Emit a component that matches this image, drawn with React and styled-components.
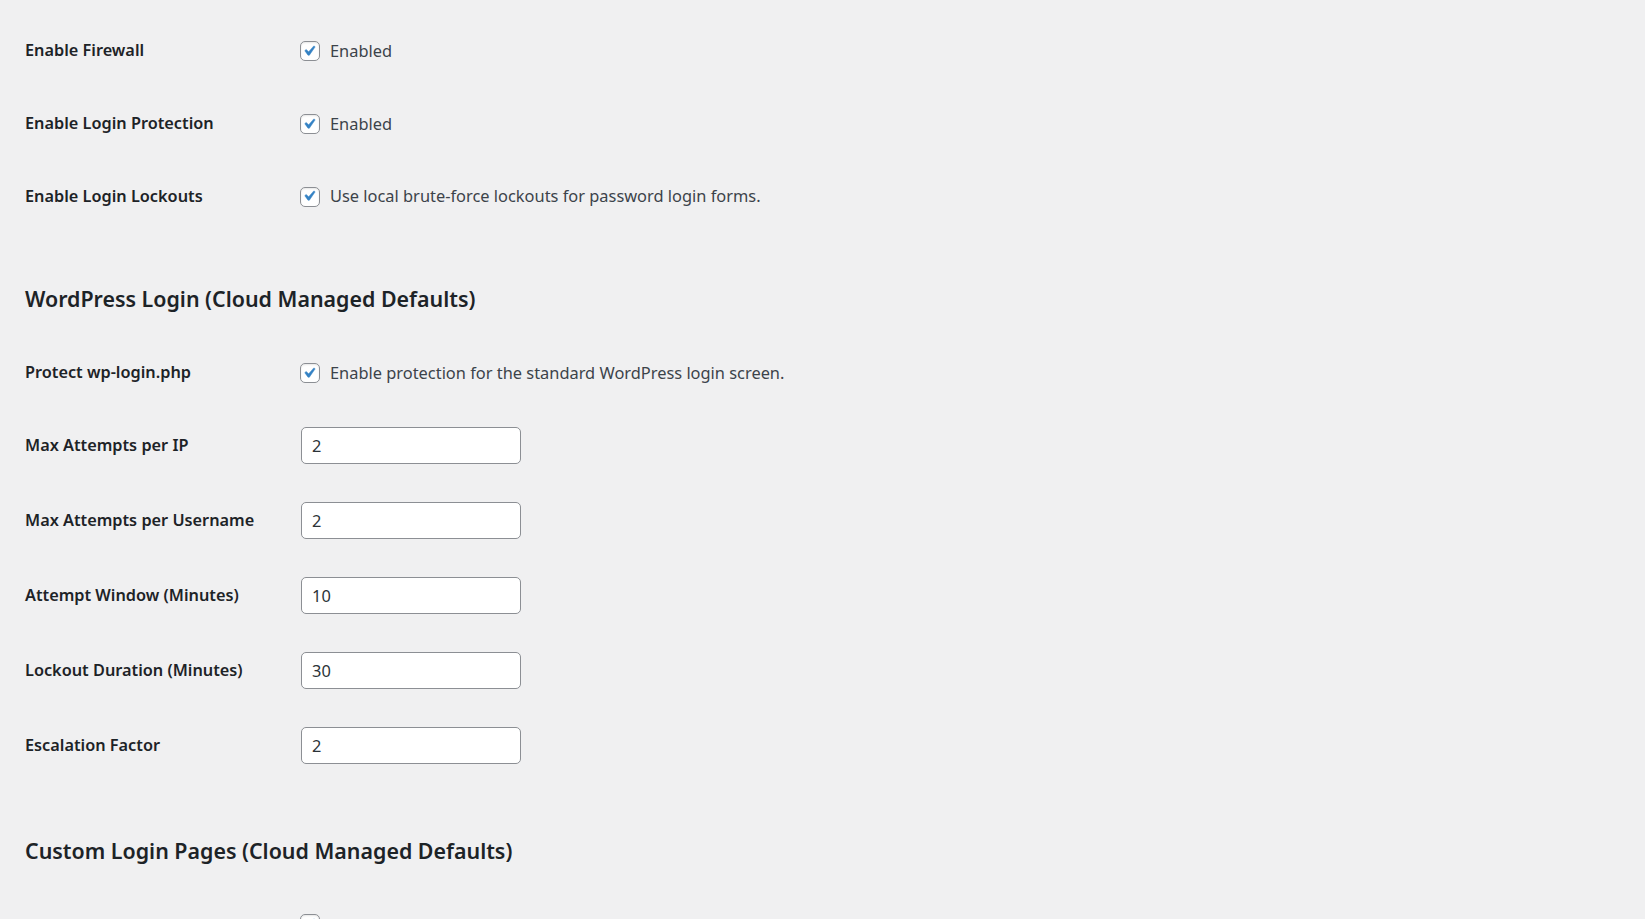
import React from 'react';
import styled, { createGlobalStyle } from 'styled-components';

const GlobalStyle = createGlobalStyle`
    html, body {
        margin: 0;
        padding: 0;
        background: #f0f0f1;
    }
    body {
        font-family: "Noto Sans", "Open Sans", sans-serif;
        color: #3c434a;
        font-size: 16.4px;
    }
`

const Page = styled.div`
    padding: 14px 25px 0 25px;
    height: 919px;
    box-sizing: border-box;
    overflow: hidden;
`

const Section = styled.div`
    display: flex;
    flex-direction: column;
`

const Heading = styled.h2`
    margin: 52px 0 22px 0;
    font-size: 21.4px;
    line-height: 29.6px;
    font-weight: 600;
    color: #1d2327;
`

const Row = styled.div`
    display: flex;
    align-items: flex-start;
    height: ${(p) => (p.$input ? '75px' : '72.75px')};
`

const Label = styled.label`
    width: 250px;
    padding: 25px 12.5px 0 0;
    line-height: 22.75px;
    font-size: 16.3px;
    font-weight: 600;
    color: #1d2327;
    flex-shrink: 0;
`

const Field = styled.div`
    padding: 18.75px 12.5px;
    display: flex;
    align-items: center;
`

const CheckLine = styled.label`
    display: flex;
    align-items: center;
    height: 37px;
    gap: 10px;
    color: #3c434a;
    line-height: 22.75px;
`

const Box = styled.span`
    width: 20px;
    height: 20px;
    box-sizing: border-box;
    border: 1px solid #8c8f94;
    border-radius: 5px;
    background: #fff;
    box-shadow: inset 0 1px 2px rgba(0, 0, 0, 0.1);
    display: flex;
    align-items: center;
    justify-content: center;
    flex-shrink: 0;
    overflow: visible;
`

const TextInput = styled.input`
    width: 220px;
    height: 37px;
    margin: 0 1px;
    box-sizing: border-box;
    border: 1px solid #8c8f94;
    border-radius: 5px;
    background: #fff;
    padding: 0 10px;
    font-family: "Noto Sans", "Open Sans", sans-serif;
    font-size: 16.4px;
    color: #2c3338;
    outline: none;
`

function Check({ text }) {
    return (
        <CheckLine>
            <Box>
                <svg width="26" height="26" viewBox="0 0 20 20" style={{ marginLeft: -2, marginTop: -1 }}>
                    <path
                        d="M14.83 4.89l1.34.94-5.81 8.38H9.02L5.78 9.67l1.34-1.25 2.57 2.4z"
                        fill="#3582c4"
                        stroke="#3582c4"
                        strokeWidth="0.5"
                        strokeLinejoin="round"
                    />
                </svg>
            </Box>
            {text && <span>{text}</span>}
        </CheckLine>
    )
}

const general = [
    { label: 'Enable Firewall', text: 'Enabled' },
    { label: 'Enable Login Protection', text: 'Enabled' },
    { label: 'Enable Login Lockouts', text: 'Use local brute-force lockouts for password login forms.' },
]

const limits = [
    { label: 'Max Attempts per IP', value: '2' },
    { label: 'Max Attempts per Username', value: '2' },
    { label: 'Attempt Window (Minutes)', value: '10' },
    { label: 'Lockout Duration (Minutes)', value: '30' },
    { label: 'Escalation Factor', value: '2' },
]

function App() {
    return (
        <>
            <GlobalStyle />
            <Page>
                <Section>
                    {general.map((e) => (
                        <Row key={e.label}>
                            <Label>{e.label}</Label>
                            <Field><Check text={e.text} /></Field>
                        </Row>
                    ))}
                </Section>

                <Heading>WordPress Login (Cloud Managed Defaults)</Heading>
                <Section>
                    <Row>
                        <Label>Protect wp-login.php</Label>
                        <Field><Check text="Enable protection for the standard WordPress login screen." /></Field>
                    </Row>
                    {limits.map((e) => (
                        <Row $input key={e.label}>
                            <Label>{e.label}</Label>
                            <Field><TextInput type="text" defaultValue={e.value} /></Field>
                        </Row>
                    ))}
                </Section>

                <Heading>Custom Login Pages (Cloud Managed Defaults)</Heading>
                <Section>
                    <Row>
                        <Label />
                        <Field><Check /></Field>
                    </Row>
                </Section>
            </Page>
        </>
    )
}

export default App
